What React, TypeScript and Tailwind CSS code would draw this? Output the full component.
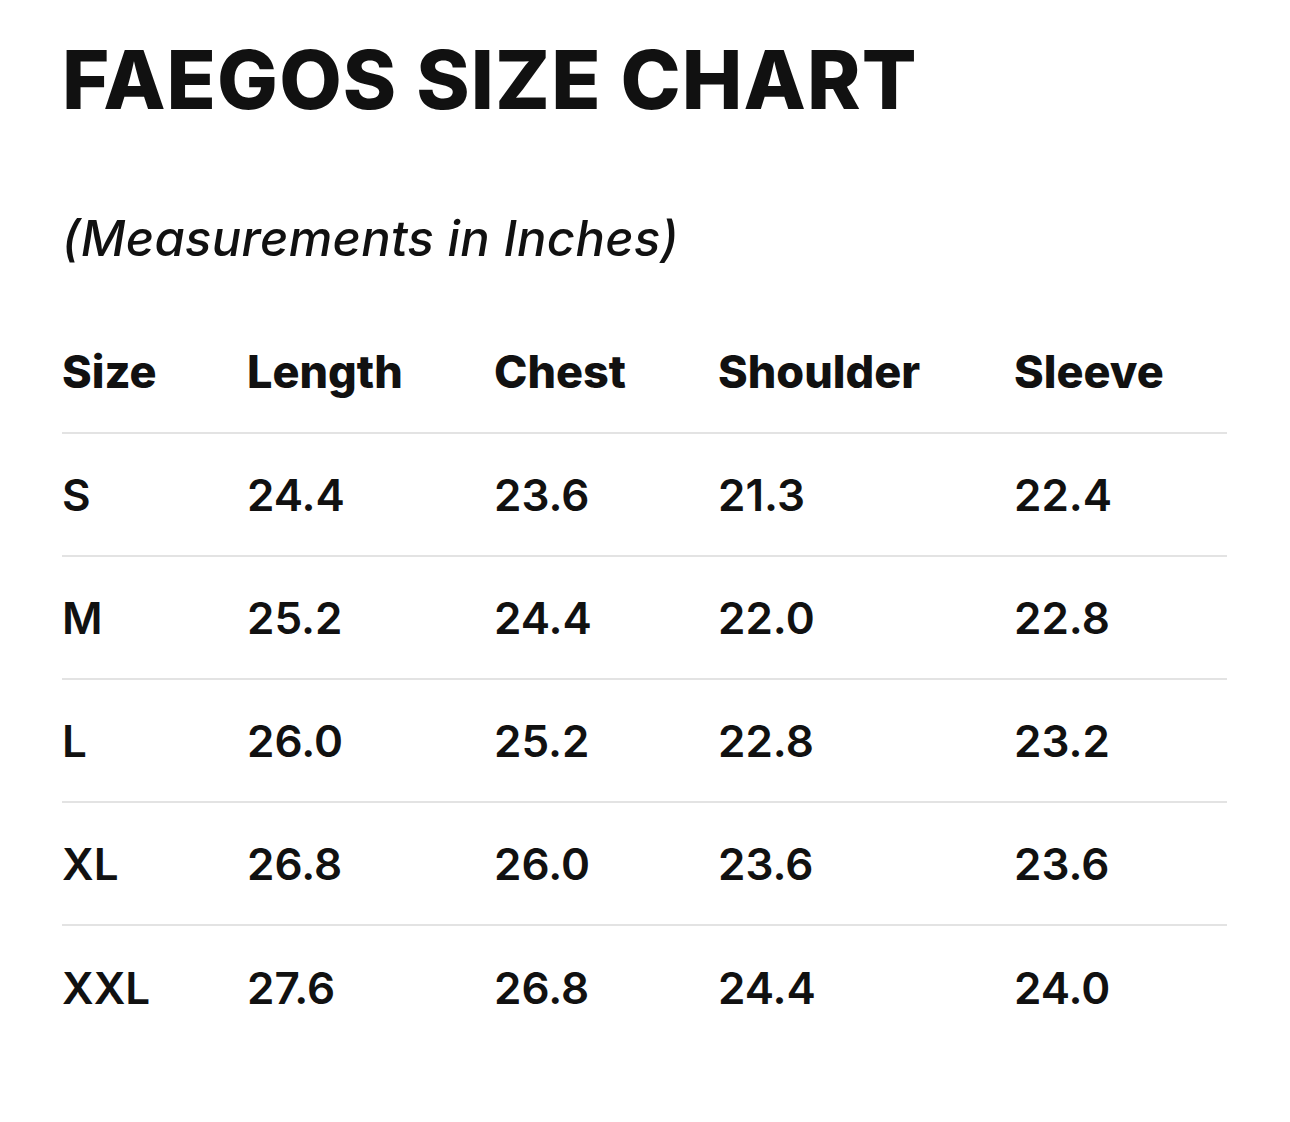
const rows = [
  ["S", "24.4", "23.6", "21.3", "22.4"],
  ["M", "25.2", "24.4", "22.0", "22.8"],
  ["L", "26.0", "25.2", "22.8", "23.2"],
  ["XL", "26.8", "26.0", "23.6", "23.6"],
  ["XXL", "27.6", "26.8", "24.4", "24.0"],
];

const headers = ["Size", "Length", "Chest", "Shoulder", "Sleeve"];

export default function App() {
  return (
    <div
      className="w-[1290px] h-[1122px] bg-white text-[#111111] pl-[62px] pr-[63px]"
      style={{ fontFamily: "Inter, 'Noto Sans', sans-serif" }}
    >
      <h1 className="pt-[40px] text-[81px] leading-[80px] font-extrabold tracking-[1.1px] whitespace-nowrap">
        FAEGOS SIZE CHART
      </h1>
      <p className="mt-[95px] text-[49px] leading-[48px] italic font-medium tracking-[0.3px] whitespace-nowrap">
        (Measurements in Inches)
      </p>
      <div className="mt-[48px]">
        <div className="grid grid-cols-[185px_247px_224px_296px_1fr] h-[123px] items-center border-b-2 border-[#e3e3e3] text-[45px] font-extrabold">
          {headers.map((h) => (
            <div key={h}>{h}</div>
          ))}
        </div>
        {rows.map((r, i) => (
          <div
            key={r[0]}
            className={
              i < rows.length - 1
                ? "grid grid-cols-[185px_247px_224px_296px_1fr] h-[123px] items-center border-b-2 border-[#e3e3e3] text-[44px] font-semibold"
                : "grid grid-cols-[185px_247px_224px_296px_1fr] h-[123px] items-center text-[44px] font-semibold"
            }
          >
            {r.map((c, j) => (
              <div key={j}>{c}</div>
            ))}
          </div>
        ))}
      </div>
    </div>
  );
}
